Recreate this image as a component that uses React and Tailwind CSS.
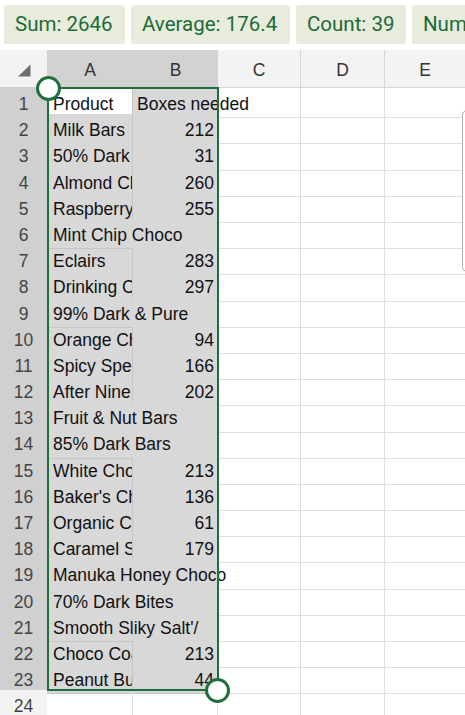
import React from "react";

const stats = [
  { label: "Sum: 2646", w: "w-[121px]" },
  { label: "Average: 176.4", w: "w-[159px]" },
  { label: "Count: 39", w: "w-[110px]" },
  { label: "Numerical Count: 39", w: "w-[190px]" },
];

const rows = [
  ["Product", "Boxes needed"],
  ["Milk Bars", 212],
  ["50% Dark Chocolate", 31],
  ["Almond Chocolate", 260],
  ["Raspberry Chocolate", 255],
  ["Mint Chip Choco", null],
  ["Eclairs", 283],
  ["Drinking Chocolate", 297],
  ["99% Dark & Pure", null],
  ["Orange Chocolate", 94],
  ["Spicy Special Slims", 166],
  ["After Nine Mints", 202],
  ["Fruit & Nut Bars", null],
  ["85% Dark Bars", null],
  ["White Chocolate", 213],
  ["Baker's Chocolate", 136],
  ["Organic Choco Syrup", 61],
  ["Caramel Stuffed Bars", 179],
  ["Manuka Honey Choco", null],
  ["70% Dark Bites", null],
  ["Smooth Sliky Salt'/", null],
  ["Choco Coated Nuts", 213],
  ["Peanut Butter Cups", 44],
];

const gridCols = "grid grid-cols-[47px_86px_85px_83px_84px_80px]";

function Row({ n, a, b }) {
  const selected = n <= rows.length;
  const first = n === 1;
  const cellLine = "border-b border-[#e0e0e0]";
  const selLine = "border-b border-[#c6c6c6]";

  return (
    <div className={`${gridCols} h-[26.2px]`}>
      <div
        className={`flex items-center justify-center pt-[3px] text-[#444] ${
          selected ? "bg-[#d0d0d0] border-b border-[#c4c4c4]" : "bg-[#f3f3f3] border-b border-[#e0e0e0]"
        }`}
      >
        {n}
      </div>

      {!selected && (
        <>
          <div className={`${cellLine} border-r`} />
          <div className={`${cellLine} border-r`} />
        </>
      )}

      {selected && b === null && (
        <div
          className={`col-span-2 flex items-center pl-[6px] pt-[3px] whitespace-nowrap overflow-visible relative z-10 bg-[#d8d8d8] ${selLine}`}
        >
          {a}
        </div>
      )}

      {selected && b !== null && (
        <>
          <div
            className={`flex items-center pl-[6px] pt-[3px] whitespace-nowrap overflow-hidden border-r border-[#c6c6c6] ${selLine} ${
              first ? "bg-white" : "bg-[#d8d8d8]"
            }`}
          >
            {a}
          </div>
          <div
            className={`flex items-center pt-[3px] whitespace-nowrap relative z-10 bg-[#d8d8d8] ${selLine} ${
              first ? "pl-[4px] overflow-visible" : "justify-end pr-[4px]"
            }`}
          >
            {b}
          </div>
        </>
      )}

      <div className={`${cellLine} border-r`} />
      <div className={`${cellLine} border-r`} />
      <div className={cellLine} />
    </div>
  );
}

export default function App() {
  return (
    <div
      className="relative w-[465px] h-[715px] overflow-hidden bg-white text-[#111]"
      style={{ fontFamily: '"Liberation Sans", Arial, sans-serif' }}
    >
      {/* Status pills */}
      <div
        className="flex gap-[6px] h-[50px] pl-[4px] pt-[5px] overflow-hidden"
        style={{ fontFamily: "Roboto, sans-serif" }}
      >
        {stats.map(s => (
          <div
            key={s.label}
            className={`${s.w} shrink-0 h-[39px] flex items-center px-[11px] rounded-[3px] bg-[#e8ecdd] text-[#1d6b36] text-[20.5px] whitespace-nowrap`}
          >
            {s.label}
          </div>
        ))}
      </div>

      {/* Column headers */}
      <div className={`${gridCols} h-[38px] text-[17.5px] text-[#333]`}>
        <div className="relative bg-[#f3f3f3] border-b border-[#d0d0d0]">
          <svg className="absolute left-[17px] top-[14px]" width="14" height="13" viewBox="0 0 14 13">
            <polygon points="1,12.5 13.5,12.5 13.5,0.5" fill="#6e6e6e" />
          </svg>
        </div>
        <div className="flex items-center justify-center pt-[4px] bg-[#d2d2d2] border-b border-[#c4c4c4]">A</div>
        <div className="flex items-center justify-center pt-[4px] bg-[#d2d2d2] border-b border-[#c4c4c4]">B</div>
        <div className="flex items-center justify-center pt-[4px] bg-[#f3f3f3] border-b border-r border-[#d6d6d6]">C</div>
        <div className="flex items-center justify-center pt-[4px] bg-[#f3f3f3] border-b border-r border-[#d6d6d6]">D</div>
        <div className="flex items-center justify-center pt-[4px] bg-[#f3f3f3] border-b border-[#d6d6d6]">E</div>
      </div>

      {/* Rows */}
      <div className="text-[17.5px]">
        {rows.map(([a, b], i) => (
          <Row key={i} n={i + 1} a={a} b={b} />
        ))}
        <Row n={24} />
      </div>

      {/* Selection rectangle */}
      <div className="absolute left-[47px] top-[87px] w-[172px] h-[604px] border-[2.5px] border-[#1f6e3d] z-20 pointer-events-none" />
      <div className="absolute left-[36px] top-[76px] w-[25px] h-[25px] rounded-full bg-white border-[3px] border-[#1f6e3d] z-30" />
      <div className="absolute left-[205px] top-[678px] w-[25px] h-[25px] rounded-full bg-white border-[3px] border-[#1f6e3d] z-30" />

      {/* Scrollbar */}
      <div className="absolute left-[462px] top-[110px] w-[12px] h-[162px] rounded-[5px] border-[1.5px] border-[#b0b0b0] bg-white z-20" />
    </div>
  );
}
